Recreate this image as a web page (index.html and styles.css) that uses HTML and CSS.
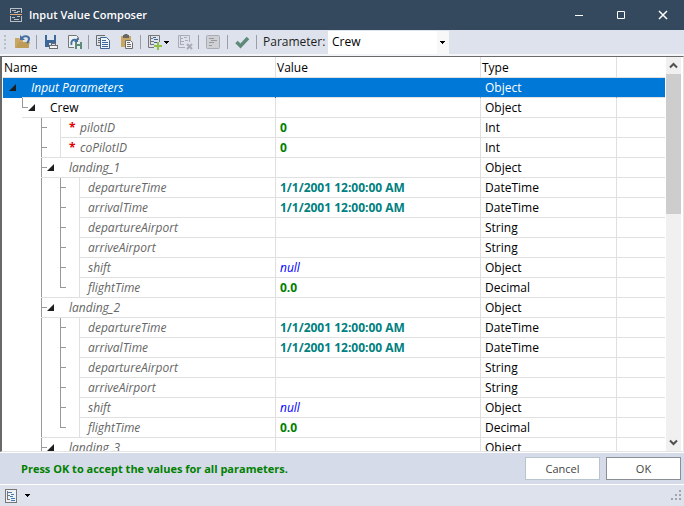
FILE: index.html
```
<!DOCTYPE html>
<html lang="en">
<head>
    <meta charset="UTF-8">
    <meta name="viewport" content="width=device-width, initial-scale=1.0">
    <title>Input Value Composer</title>
    <link rel="stylesheet" href="styles.css">
</head>
<body>
    <div class="window">
        <header class="titlebar">
            <svg class="app-icon" width="14" height="16" viewBox="0 0 14 16" fill="none" shape-rendering="crispEdges">
                <path d="M1.500 6V1.500h11V6M1.500 9v5.500h11V9" stroke="#b9bec4"/>
                <path d="M1 7.500h12" stroke="#e0a878"/>
                <path d="M3 3.500h4M5 5.500h4M8 4.500h3M3 10.500h3M5 12.500h5M8 9.500h3" stroke="#b9bec4"/>
            </svg>
            <h1 class="title">Input Value Composer</h1>
            <button class="win-btn" aria-label="Minimize">
                <svg width="10" height="10" viewBox="0 0 10 10"><path d="M1 5.500h8" stroke="#fff"/></svg>
            </button>
            <button class="win-btn" aria-label="Maximize">
                <svg width="10" height="10" viewBox="0 0 10 10"><path d="M1.500 1.500h7v7h-7z" fill="none" stroke="#fff"/></svg>
            </button>
            <button class="win-btn" aria-label="Close">
                <svg width="10" height="10" viewBox="0 0 10 10"><path d="M1 1l8 8M9 1l-8 8" stroke="#fff" stroke-width="1.500"/></svg>
            </button>
        </header>

        <div class="toolbar">
            <span class="grip"></span>
            <button class="tool" aria-label="Open">
                <svg width="16" height="16" viewBox="0 0 16 16">
                    <path d="M0 14V4h4l1 1h3v3h6v6z" fill="#c9a661"/>
                    <path d="M1 14l3-6h11l-2 6z" fill="#bd9c58"/>
                    <path d="M7 4c2-3 7-2 7 1 0 2-1 3-2 4" fill="none" stroke="#44709f" stroke-width="2"/>
                    <path d="M5 1v5h5z" fill="#44709f"/>
                </svg>
            </button>
            <span class="sep"></span>
            <button class="tool" aria-label="Save">
                <svg width="16" height="16" viewBox="0 0 16 16" shape-rendering="crispEdges">
                    <path d="M1 1h2v5h7V1h2v8H5v4H1z" fill="#3c6797"/>
                    <path d="M3 1h7v5H3z" fill="#dbe4ef"/>
                    <path d="M3 6h7v2H3zM3 9h2v4H3z" fill="#3c6797"/>
                    <path d="M5.500 11.500h8v3h-8z" fill="#f3f5f8" stroke="#6c6c6c"/>
                    <path d="M7.500 11V9.500h4V11" fill="none" stroke="#6c6c6c"/>
                </svg>
            </button>
            <button class="tool" aria-label="Reload saved values">
                <svg width="16" height="16" viewBox="0 0 16 16">
                    <path d="M11.500 6V3.500l-2-2h-8v12H7" fill="#eef1f6" stroke="#777"/>
                    <path d="M4.500 11C3.500 7 6 5 9 6" fill="none" stroke="#44709f" stroke-width="2"/>
                    <path d="M11 3v5H7z" fill="#44709f"/>
                    <path d="M8 8h7v7H8z" fill="#5f8a7a"/>
                    <path d="M10 8h3v2h-3zM10 12h3v3h-3z" fill="#e4eeea"/>
                </svg>
            </button>
            <span class="sep"></span>
            <button class="tool" aria-label="Copy">
                <svg width="16" height="16" viewBox="0 0 16 16" fill="none">
                    <path d="M9 1.500H.5v10H4" stroke="#6c6c6c"/>
                    <path d="M2 4.500h2M2 6.500h2M2 8.500h2" stroke="#6c6c6c"/>
                    <path d="M4.500 3.500h6l3 3v8h-9z" fill="#f1f5fa" stroke="#3c6797"/>
                    <path d="M6 6.500h4M6 8.500h6M6 10.500h6M6 12.500h6" stroke="#3c6797"/>
                </svg>
            </button>
            <button class="tool" aria-label="Paste">
                <svg width="16" height="16" viewBox="0 0 16 16">
                    <path d="M2 2h10v5H7v6H2z" fill="#c9a661"/>
                    <path d="M4 1h1.500V0h3v1H10v3H4z" fill="#666"/>
                    <path d="M6.500 6.500h5l2 2v6h-7z" fill="#f4f4f4" stroke="#6c6c6c"/>
                    <path d="M8 8.500h3M8 10.500h4M8 12.500h4" stroke="#6c6c6c"/>
                </svg>
            </button>
            <span class="sep"></span>
            <button class="tool tool-menu" aria-label="Add item">
                <svg width="16" height="16" viewBox="0 0 16 16" fill="none">
                    <path d="M11.500 8V1.500H.5v12H6" stroke="#777"/>
                    <path d="M2.500 2v9M3 4.500h2M3 7.500h3M3 10.500h3" stroke="#777"/>
                    <path d="M5 3.500h3M6 5.500h4M6 8.500h3" stroke="#3c6797"/>
                    <path d="M10 8v8M6 12h8" stroke="#8fbf45" stroke-width="2"/>
                </svg>
                <svg width="5" height="3" viewBox="0 0 5 3" shape-rendering="crispEdges"><path d="M0 0h5v1H4v1H3v1H2V2H1V1H0z"/></svg>
            </button>
            <button class="tool" aria-label="Delete item" disabled>
                <svg width="16" height="16" viewBox="0 0 16 16" fill="none" stroke="#a9acb3">
                    <path d="M12.500 8V1.500h-11v12H8"/>
                    <path d="M3.500 2v9M4 4.500h2M4 7.500h3M4 10.500h3M7 3.500h3M8 6.500h3"/>
                    <path d="M10 10l5 5M15 10l-5 5" stroke-width="2"/>
                </svg>
            </button>
            <span class="sep"></span>
            <button class="tool" aria-label="Show text" disabled>
                <svg width="16" height="16" viewBox="0 0 16 16" fill="none">
                    <rect x=".5" y="1.500" width="13" height="13" rx="1" fill="#cfd0d3" stroke="#a9acb3"/>
                    <path d="M3 4.500h5M5 6.500h6M3 8.500h5M3 11.500h3" stroke="#96989d"/>
                </svg>
            </button>
            <span class="sep"></span>
            <button class="tool" aria-label="Validate">
                <svg width="16" height="16" viewBox="0 0 16 16"><path d="M1.500 8l4 4L13 4" fill="none" stroke="#5f8a7a" stroke-width="3.500"/></svg>
            </button>
            <span class="sep"></span>
            <label class="param-label" for="parameter">Parameter:</label>
            <span class="combo">
                <select id="parameter">
                    <option>Crew</option>
                </select>
                <svg class="combo-arrow" width="5" height="3" viewBox="0 0 5 3" shape-rendering="crispEdges"><path d="M0 0h5v1H4v1H3v1H2V2H1V1H0z"/></svg>
            </span>
        </div>

        <main class="grid">
            <div class="rows">
                <table>
                    <colgroup>
                        <col class="col-name"><col class="col-value"><col class="col-type"><col>
                    </colgroup>
                    <thead>
                        <tr><th>Name</th><th>Value</th><th>Type</th><th></th></tr>
                    </thead>
                    <tbody id="tree"></tbody>
                </table>
            </div>
            <div class="scrollbar">
                <button class="scroll-btn" aria-label="Scroll up">
                    <svg width="9" height="7" viewBox="0 0 9 7"><path d="M1 5.500L4.500 2 8 5.500" fill="none" stroke="#505050" stroke-width="2"/></svg>
                </button>
                <div class="scroll-track"><div class="scroll-thumb"></div></div>
                <button class="scroll-btn" aria-label="Scroll down">
                    <svg width="9" height="7" viewBox="0 0 9 7"><path d="M1 1.500L4.500 5 8 1.500" fill="none" stroke="#505050" stroke-width="2"/></svg>
                </button>
            </div>
        </main>

        <div class="actions">
            <p class="message">Press OK to accept the values for all parameters.</p>
            <button class="btn">Cancel</button>
            <button class="btn btn-default">OK</button>
        </div>

        <footer class="statusbar">
            <button class="status-tool" aria-label="View">
                <svg width="12" height="14" viewBox="0 0 12 14" fill="none" shape-rendering="crispEdges">
                    <path d="M.5.500h11v13H.5z" fill="#eef1f6" stroke="#777"/>
                    <path d="M2.500 2v9M2 3.500h2M3 6.500h2M3 10.500h2" stroke="#777"/>
                    <path d="M4 3.500h3M6 5.500h3M5 7.500h3M6 9.500h4M6 11.500h4" stroke="#3f7ab8"/>
                </svg>
                <svg width="5" height="3" viewBox="0 0 5 3" shape-rendering="crispEdges"><path d="M0 0h5v1H4v1H3v1H2V2H1V1H0z"/></svg>
            </button>
            <svg width="11" height="11" viewBox="0 0 11 11" fill="#a0a4ac" shape-rendering="crispEdges">
                <path d="M8 0h2v2H8zM4 4h2v2H4zM8 4h2v2H8zM0 8h2v2H0zM4 8h2v2H4zM8 8h2v2H8z"/>
            </svg>
        </footer>
    </div>

    <script src="script.js"></script>
</body>
</html>
```

FILE: styles.css
```
* {
    box-sizing: border-box;
}
body {
    margin: 0;
    font-family: "Open Sans", "Noto Sans", sans-serif;
    font-size: 12px;
    line-height: 16px;
    color: #000;
}
button {
    padding: 0;
    border: none;
    background: none;
    font: inherit;
}
svg {
    display: block;
    flex: none;
}
.window {
    display: flex;
    flex-direction: column;
    height: 100vh;
    overflow: hidden;
}

/* title bar */
.titlebar {
    display: flex;
    flex: none;
    align-items: center;
    height: 30px;
    padding-left: 9px;
    background-color: #35495e;
}
.title {
    flex: 1;
    margin: 0 0 0 6px;
    font-size: 11px;
    font-weight: 600;
    color: #fff;
}
.win-btn {
    display: flex;
    align-items: center;
    justify-content: center;
    width: 42px;
    height: 30px;
}

/* toolbar */
.toolbar {
    display: flex;
    flex: none;
    align-items: center;
    height: 26px;
    padding-left: 4px;
    background-color: #dee2ec;
    border-bottom: 2px solid #f4f5f8;
}
.grip {
    width: 2px;
    height: 14px;
    margin-right: 6px;
    background: repeating-linear-gradient(#b9bdc6 0 2px, transparent 2px 4px);
}
.tool {
    display: flex;
    align-items: center;
    width: 23px;
    height: 22px;
    padding-left: 3px;
}
.tool-menu {
    width: 29px;
}
.sep {
    width: 1px;
    height: 14px;
    margin: 0 4px 0 1px;
    background-color: #9a9da5;
}
.param-label {
    width: 67px;
    padding-left: 2px;
    color: #1e1e1e;
}
.combo {
    display: grid;
    align-items: center;
    width: 121px;
    height: 23px;
    background-color: #fff;
}
.combo select {
    grid-area: 1 / 1;
    height: 23px;
    padding: 0 4px;
    border: none;
    background: linear-gradient(#f8f8f8, #f8f8f8) right / 12px 100% no-repeat;
    font: inherit;
    appearance: none;
}
.combo-arrow {
    grid-area: 1 / 1;
    justify-self: end;
    margin-right: 4px;
    pointer-events: none;
}

/* parameter tree */
.grid {
    display: flex;
    flex: 1;
    min-height: 0;
    padding: 0 2px 0 1px;
    border: 1px solid #e3e3e3;
    border-top-color: #696969;
    border-left: 2px solid #696969;
    background-color: #fff;
}
.rows {
    flex: 1;
    overflow: hidden;
    margin-right: 1px;
}
table {
    width: 100%;
    border-spacing: 0;
    table-layout: fixed;
}
.col-name {
    width: 273px;
}
.col-value {
    width: 205px;
}
.col-type {
    width: 136px;
}
th,
td {
    height: 20px;
    padding: 0 0 0 4px;
    border-right: 1px solid #e0e0e0;
    border-bottom: 1px solid #e0e0e0;
    line-height: 19px;
    text-align: left;
    white-space: nowrap;
}
th {
    height: 21px;
    padding-left: 1px;
    font-weight: normal;
}
th:last-child,
td:last-child {
    border-right: none;
}
.name-cell {
    padding: 0;
    border-bottom: none;
}
.name {
    display: flex;
    height: 20px;
}
.guide {
    width: 19px;
    background: linear-gradient(#999, #999) 0 0 / 1px 100% no-repeat;
}
.guide.empty {
    background: none;
}
.guide.tick {
    background:
        linear-gradient(#999, #999) 0 0 / 1px 100% no-repeat,
        linear-gradient(#999, #999) 0 9px / 6px 1px no-repeat;
}
.guide.elbow {
    background:
        linear-gradient(#999, #999) 0 0 / 1px 10px no-repeat,
        linear-gradient(#999, #999) 0 9px / 6px 1px no-repeat;
}
.guide.line {
    border-bottom: 1px solid #e0e0e0;
}
.guide svg {
    margin: 6px 0 0 6px;
}
.label {
    flex: 1;
    padding-left: 9px;
    border-bottom: 1px solid #e0e0e0;
    font-style: italic;
    color: #666;
}
.label.leaf {
    padding-left: 8px;
    border-left: 1px solid #e0e0e0;
}
.label.required {
    display: flex;
    gap: 5px;
}
.label.plain {
    font-style: normal;
    color: #000;
}
/* star of a required value hangs out into the indent */
.star {
    width: 6px;
    font-style: normal;
    font-weight: bold;
    color: #e00000;
}
.number,
.date {
    font-weight: bold;
    color: #008000;
}
.date {
    color: #008080;
}
.null {
    font-style: italic;
    color: #0000ff;
}
.selected td {
    background-color: #0078d7;
    border-right-color: #0078d7;
    color: #fff;
}
.selected .label {
    color: #fff;
}

/* scrollbar */
.scrollbar {
    display: flex;
    flex-direction: column;
    width: 15px;
    background-color: #f0f0f0;
}
.scroll-btn {
    display: flex;
    align-items: center;
    justify-content: center;
    height: 17px;
}
.scroll-track {
    flex: 1;
}
.scroll-thumb {
    height: 39%;
    background-color: #cdcdcd;
}

/* bottom bars */
.actions {
    display: flex;
    flex: none;
    align-items: center;
    gap: 6px;
    height: 33px;
    padding: 0 3px 0 21px;
    background-color: #d6dbe9;
    border-top: 1px solid #fff;
    border-bottom: 1px solid #fff;
}
.message {
    flex: 1;
    margin: 0;
    font-size: 11px;
    font-weight: bold;
    color: #008000;
}
.btn {
    width: 75px;
    height: 23px;
    background-color: #fff;
    border: 1px solid #b8c4ce;
    font-size: 11px;
    color: #444;
}
.btn-default {
    border-color: #8a8f96;
}
.statusbar {
    display: flex;
    flex: none;
    align-items: center;
    justify-content: space-between;
    height: 21px;
    padding: 0 2px 0 5px;
    background-color: #dee2ec;
}
.status-tool {
    display: flex;
    align-items: center;
    gap: 8px;
}
```

FILE: script.js
```
var landing = [
    ["departureTime", "1/1/2001 12:00:00 AM", "DateTime", "date"],
    ["arrivalTime", "1/1/2001 12:00:00 AM", "DateTime", "date"],
    ["departureAirport", "", "String", ""],
    ["arriveAirport", "", "String", ""],
    ["shift", "null", "Object", "null"],
    ["flightTime", "0.0", "Decimal", "number"]
];
var arrow = '<svg width="7" height="7" viewBox="0 0 7 7"><path d="M7 0v7H0z" fill="#1e1e1e"/></svg>';
var star = '<span class="star">*</span>';
var tree = document.getElementById("tree");

// guides: class names of the tree lines, left to right
function addRow(guides, label, labelClass, value, valueClass, type, isParent) {
    var row = tree.insertRow();
    var lines = guides.map(function (g, i) {
        var last = i === guides.length - 1;
        return `<span class="guide ${g}">${last && isParent ? arrow : ""}</span>`;
    }).join("");
    row.innerHTML = `
        <td class="name-cell"><div class="name">${lines}<span class="label ${labelClass}">${label}</span></div></td>
        <td class="${valueClass}">${value}</td>
        <td>${type}</td>
        <td></td>
    `;
    return row;
}

function addLanding(name, fields) {
    addRow(["empty", "empty", "tick line"], name, "", "", "", "Object", true);
    fields.forEach(function (f, i) {
        var end = i === fields.length - 1;
        var guides = ["empty", "empty", end ? "line" : "", end ? "elbow line" : "tick"];
        addRow(guides, f[0], "leaf", f[1], f[3], f[2], false);
    });
}

addRow(["empty"], "Input Parameters", "", "", "", "Object", true).className = "selected";
addRow(["empty", "elbow line"], "Crew", "plain", "", "", "Object", true);
addRow(["empty", "empty", "tick"], star + "<span>pilotID</span>", "leaf required", "0", "number", "Int", false);
addRow(["empty", "empty", "tick line"], star + "<span>coPilotID</span>", "leaf required", "0", "number", "Int", false);
addLanding("landing_1", landing);
addLanding("landing_2", landing);
addLanding("landing_3", []);
```
